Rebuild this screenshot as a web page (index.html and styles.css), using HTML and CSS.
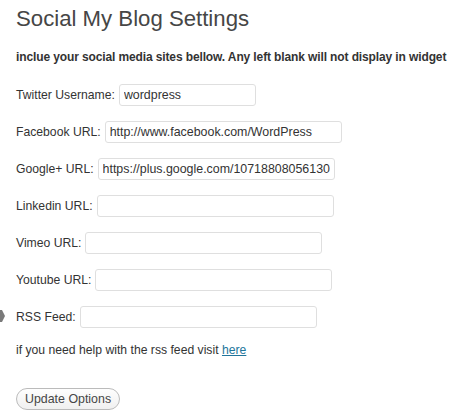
FILE: index.html
```html
<!DOCTYPE html>
<html>
<head>
<meta charset="utf-8">
<link rel="stylesheet" href="styles.css">
</head>
<body>
<span class="menu-arrow"></span>
<div class="wrap">
  <h2 class="title">Social My Blog Settings</h2>
  <p class="intro">inclue your social media sites bellow. Any left blank will not display in widget</p>
  <form class="form">
    <div class="row"><label>Twitter Username:</label><input class="field short" type="text" value="wordpress"></div>
    <div class="row"><label>Facebook URL:</label><input class="field" type="text" value="http://www.facebook.com/WordPress"></div>
    <div class="row"><label>Google+ URL:</label><input class="field" type="text" value="https://plus.google.com/107188080561309"></div>
    <div class="row"><label>Linkedin URL:</label><input class="field" type="text" value=""></div>
    <div class="row"><label>Vimeo URL:</label><input class="field" type="text" value=""></div>
    <div class="row"><label>Youtube URL:</label><input class="field" type="text" value=""></div>
    <div class="row"><label>RSS Feed:</label><input class="field" type="text" value=""></div>
    <p class="help">if you need help with the rss feed visit <a href="#">here</a></p>
    <button type="button" class="btn">Update Options</button>
  </form>
</div>
</body>
</html>
```
FILE: styles.css
```css
html, body {
  margin: 0;
  padding: 0;
  background: #fff;
}
body {
  font-family: Arial, "Liberation Sans", sans-serif;
  font-size: 12.2px;
  color: #333;
  position: relative;
}
.wrap {
  padding: 0 0 0 16px;
}
.title {
  margin: 0;
  padding-top: 4px;
  font-family: "Liberation Sans", Arial, sans-serif;
  font-weight: normal;
  font-size: 22.2px;
  line-height: 29px;
  color: #464646;
}
.intro {
  margin: 16px 0 0 0;
  font-weight: bold;
  font-size: 12px;
  letter-spacing: -0.12px;
  line-height: 16px;
  white-space: nowrap;
  color: #333;
}
.form {
  margin-top: 19px;
}
.row {
  display: flex;
  align-items: center;
  gap: 4px;
  height: 22px;
  margin-bottom: 15px;
  color: #333;
}
.field {
  box-sizing: border-box;
  width: 237px;
  height: 22px;
  margin: 0;
  padding: 0 4px;
  border: 1px solid #dfdfdf;
  border-radius: 3px;
  background: #fff;
  font-family: "Liberation Sans", Arial, sans-serif;
  font-size: 12.4px;
  color: #333;
  outline: none;
}
.field.short {
  width: 137px;
}
.help {
  margin: -1px 0 0 0;
  line-height: 16px;
}
.help a {
  color: #21759b;
  text-decoration: underline;
}
.btn {
  margin-top: 30px;
  box-sizing: border-box;
  height: 22px;
  padding: 0 8px;
  border: 1px solid #bbb;
  border-radius: 11px;
  background: linear-gradient(#fefefe, #f0f0f0);
  font-family: "Liberation Sans", Arial, sans-serif;
  font-size: 12.4px;
  color: #464646;
}
.menu-arrow {
  position: absolute;
  left: 0;
  top: 310px;
  width: 5px;
  height: 12px;
  background: #7a7a7a;
  clip-path: polygon(0 0, 40% 0, 100% 50%, 40% 100%, 0 100%);
}
```
